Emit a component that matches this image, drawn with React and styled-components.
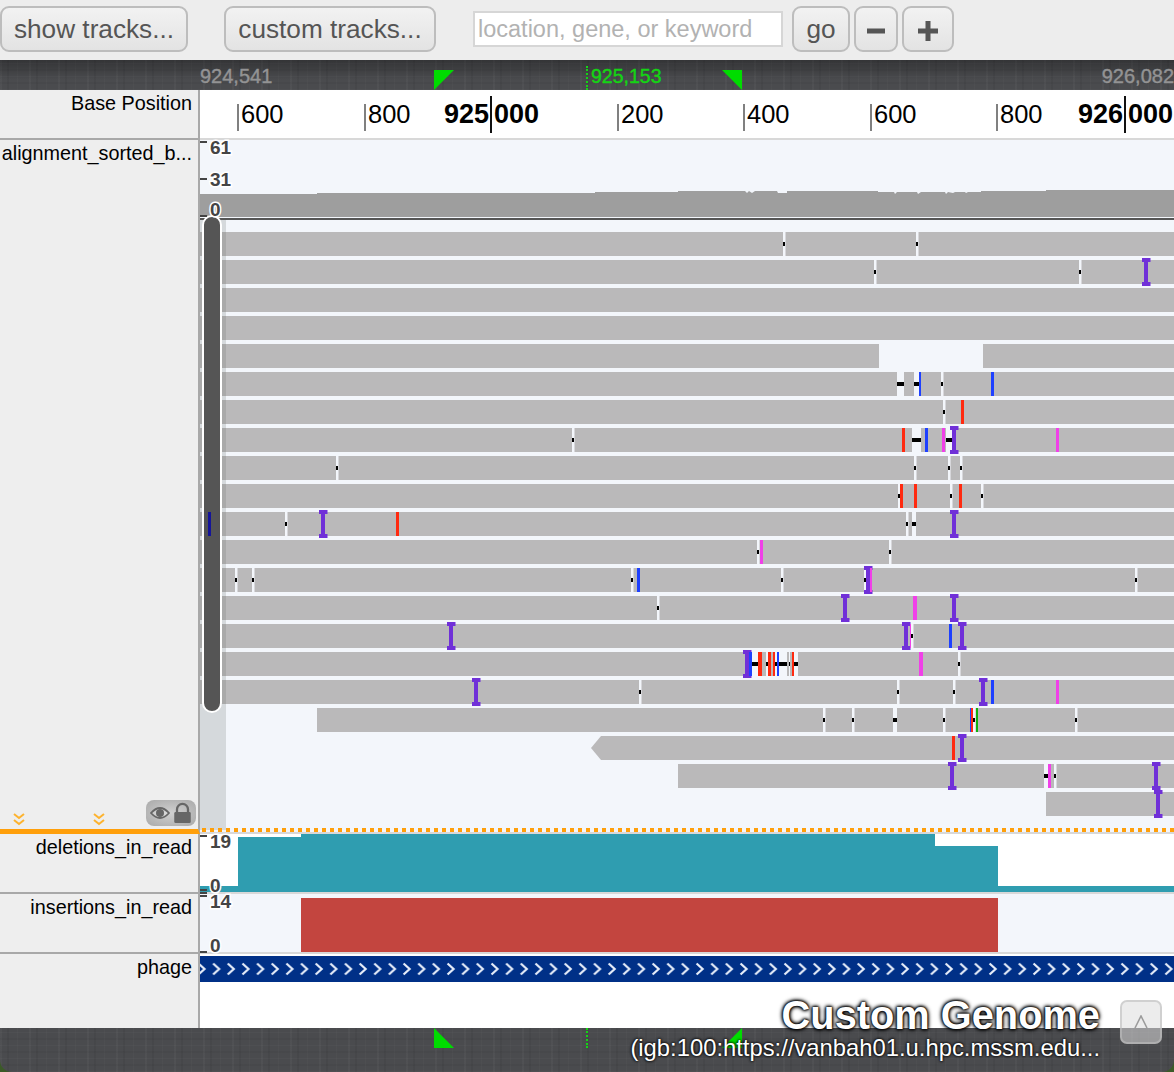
import React from 'react';
import styled, { createGlobalStyle } from 'styled-components';

const GlobalStyle = createGlobalStyle`
  html, body {
    margin: 0;
    padding: 0;
    background: #3c5a28;
    overflow: hidden;
  }
  * {
    box-sizing: border-box;
  }
`;

const darkTexture = `
  background-color: #4a4b4e;
  background-image:
    repeating-linear-gradient(90deg, rgba(255,255,255,0.03) 0 2px, transparent 2px 7px, rgba(0,0,0,0.05) 7px 9px, transparent 9px 17px, rgba(255,255,255,0.02) 17px 18px, transparent 18px 29px),
    repeating-linear-gradient(0deg, rgba(255,255,255,0.025) 0 1px, transparent 1px 6px, rgba(0,0,0,0.04) 6px 8px, transparent 8px 13px);
`;

const Page = styled.div`
  position: relative;
  width: 1174px;
  height: 1072px;
  display: flex;
  flex-direction: column;
  font-family: 'Liberation Sans', Arial, sans-serif;
  overflow: hidden;
`;

const Toolbar = styled.div`
  height: 60px;
  flex: none;
  display: flex;
  align-items: flex-start;
  padding: 6px 0 0 0;
  background: #ededed;
`;

const ToolButton = styled.button`
  width: ${(p) => p.$width}px;
  height: 46px;
  margin-left: ${(p) => p.$gap || 0}px;
  padding: 0;
  display: flex;
  align-items: center;
  justify-content: center;
  border: 2px solid #bdbdbd;
  border-radius: 9px;
  background: linear-gradient(#f2f2f2, #e3e3e3);
  color: #555;
  font-family: inherit;
  font-size: 26.2px;
`;

const ButtonGlyph = styled.svg`
  display: block;
  margin-top: 3px;
`;

const SearchInput = styled.input`
  width: 310px;
  height: 36px;
  margin: 5px 0 0 37px;
  padding: 1px 3px 0;
  border: 2px solid #d6d6d6;
  background: #fff;
  font-family: inherit;
  font-size: 23.5px;
  color: #555;

  &::placeholder {
    color: #b2b2b2;
    opacity: 1;
  }
`;

const Overview = styled.div`
  position: relative;
  height: 30px;
  flex: none;
  display: flex;
  justify-content: space-between;
  align-items: flex-end;
  padding: 0 0 0 200px;
  ${darkTexture}
`;

const OverviewShade = styled.div`
  position: absolute;
  inset: 0 0 10px 0;
  background: linear-gradient(rgba(0,0,0,0.3), rgba(0,0,0,0));
`;

const OverviewLabel = styled.span`
  position: relative;
  font-size: 20px;
  line-height: 27px;
  color: ${(p) => (p.$active ? '#14d414' : '#939394')};
  -webkit-text-stroke: 0.4px ${(p) => (p.$active ? '#14d414' : '#939394')};
`;

const CenterLabel = styled(OverviewLabel)`
  position: absolute;
  left: 591px;
  bottom: 0;
  font-size: 19.5px;
`;

const Flag = styled.div`
  position: absolute;
  left: ${(p) => p.$left}px;
  ${(p) => (p.$top ? 'top: 0;' : 'bottom: 0;')}
  width: 20px;
  height: 20px;
  background: #00dc00;
  clip-path: ${(p) => p.$shape};
`;

const CenterLine = styled.div`
  position: absolute;
  left: 586px;
  top: ${(p) => p.$top}px;
  height: ${(p) => p.$height}px;
  border-left: 2px dotted #14d414;
`;

const TrackRow = styled.div`
  height: ${(p) => p.$height}px;
  flex: none;
  display: grid;
  grid-template-columns: 200px 974px;
`;

const TrackLabel = styled.div`
  position: relative;
  padding: ${(p) => p.$top ?? 1}px 6px 0 0;
  background: #eeeeee;
  border-right: 2px solid #a8a8a8;
  border-bottom: ${(p) => (p.$accent ? '5px solid #ff9f0a' : '2px solid #a8a8a8')};
  color: #000;
  font-size: 19.8px;
  line-height: 24px;
  text-align: right;
  white-space: nowrap;
`;

const LastLabel = styled(TrackLabel)`
  border-bottom: none;
`;

const Canvas = styled.svg`
  display: block;
  width: 974px;
  height: ${(p) => p.$height}px;
  overflow: visible;
`;

const Collapse = styled.svg`
  position: absolute;
  bottom: 3px;
  left: ${(p) => p.$left}px;
  width: 14px;
  height: 14px;
`;

const LockPill = styled.div`
  position: absolute;
  right: 2px;
  bottom: 3px;
  width: 50px;
  height: 26px;
  display: flex;
  align-items: center;
  justify-content: space-between;
  padding: 0 4px 0 4px;
  border-radius: 8px;
  background: radial-gradient(ellipse at center, #d0d0d0, #a9a9a9);
`;

const BottomBar = styled.div`
  flex: 1;
  border-radius: 0 0 12px 12px;
  position: relative;
  ${darkTexture}
`;

const GenomeTitle = styled.div`
  position: absolute;
  right: 74px;
  top: 992px;
  font-size: 39.8px;
  line-height: 46px;
  font-weight: 700;
  color: #fff;
  text-shadow: 0 0 5px #000, 0 0 4px #000, 0 0 3px #000, 0 0 2px #000;
  white-space: nowrap;
`;

const GenomeUrl = styled.div`
  position: absolute;
  right: 74px;
  top: 1034px;
  font-size: 23.8px;
  line-height: 28px;
  color: #fff;
  text-shadow: 0 0 3px #000, 0 0 3px #000;
  white-space: nowrap;
`;

const UpButton = styled.div`
  position: absolute;
  left: 1120px;
  top: 1000px;
  width: 42px;
  height: 44px;
  display: flex;
  align-items: center;
  justify-content: center;
  border: 2px solid rgba(190, 190, 190, 0.6);
  border-radius: 7px;
  background: rgba(220, 220, 220, 0.55);
`;

const GREY = '#bab9ba';
const PANEL = '#f3f6fb';
const PURPLE = '#7030d8';
const RED = '#ff2a10';
const BLUE = '#1e40ff';
const MAGENTA = '#f040e8';
const GREEN = '#10b010';

// marks: d = deletion, D = wide deletion [x, w], i = insertion, s = snp colour
const reads = [
  { start: 200, marks: [['d', 784], ['d', 917]] },
  { start: 200, marks: [['d', 875], ['d', 1080], ['i', 1146]] },
  { start: 200, marks: [] },
  { start: 200, marks: [] },
  { start: 200, gap: [879, 983], marks: [] },
  { start: 200, marks: [['D', 897, 7], ['D', 914, 5], ['s', 919, BLUE, 2], ['d', 942], ['s', 991, BLUE, 3]] },
  { start: 200, marks: [['d', 944], ['s', 961, RED, 3]] },
  { start: 200, marks: [['d', 573], ['s', 902, RED, 3], ['D', 912, 9], ['s', 925, BLUE, 3], ['s', 942, MAGENTA, 3], ['D', 946, 6], ['i', 954], ['s', 1056, MAGENTA, 3]] },
  { start: 200, marks: [['d', 337], ['d', 915], ['d', 949], ['d', 961]] },
  { start: 200, marks: [['d', 899], ['s', 900, RED, 3], ['s', 914, RED, 3], ['d', 951], ['s', 959, RED, 3], ['d', 982]] },
  { start: 200, marks: [['d', 286], ['i', 323], ['s', 396, RED, 3], ['d', 907], ['D', 912, 4], ['i', 954]] },
  { start: 200, marks: [['d', 758], ['s', 760, MAGENTA, 3], ['d', 890]] },
  { start: 200, marks: [['d', 236], ['d', 253], ['d', 632], ['s', 637, BLUE, 3], ['d', 782], ['d', 865], ['i', 868], ['s', 870, MAGENTA, 2], ['d', 1136]] },
  { start: 200, marks: [['d', 658], ['i', 845], ['s', 913, MAGENTA, 4], ['i', 954]] },
  { start: 200, marks: [['i', 451], ['i', 906], ['s', 910, MAGENTA, 2], ['d', 912], ['s', 949, BLUE, 3], ['i', 962]] },
  {
    start: 200,
    marks: [
      ['D', 750, 48],
      ['s', 762, GREY, 4], ['s', 768, RED, 3], ['s', 771, GREY, 2], ['s', 773, RED, 2], ['s', 787, GREY, 2], ['s', 790, GREY, 3],
      ['i', 747], ['s', 749, BLUE, 3], ['s', 758, RED, 4], ['s', 777, BLUE, 2], ['s', 792, RED, 2],
      ['s', 919, MAGENTA, 4], ['d', 959],
    ],
  },
  { start: 200, marks: [['i', 476], ['d', 640], ['d', 898], ['d', 954], ['i', 983], ['s', 991, BLUE, 3], ['s', 1056, MAGENTA, 3]] },
  { start: 317, marks: [['d', 824], ['d', 853], ['D', 893, 4], ['d', 944], ['s', 970, BLUE, 1], ['s', 971, RED, 3], ['d', 974], ['s', 976, GREEN, 2], ['d', 1076]] },
  { start: 601, arrow: true, marks: [['s', 952, RED, 3], ['i', 962]] },
  { start: 678, marks: [['i', 952], ['D', 1044, 6], ['s', 1048, MAGENTA, 3], ['d', 1055], ['i', 1156]] },
  { start: 1046, marks: [['i', 1158]] },
];

const rowTop = (i) => 232 + i * 28;

const Mark = ({ mark, y }) => {
  const [kind, x, third, fourth] = mark;
  if (kind === 'i') {
    return (
      <g fill={PURPLE}>
        <rect x={x - 2} y={y - 2} width={4} height={28} />
        <rect x={x - 4} y={y - 2} width={8.5} height={4} />
        <rect x={x - 4} y={y + 22} width={8.5} height={4} />
      </g>
    );
  }
  if (kind === 's') {
    return <rect x={x} y={y} width={fourth} height={24} fill={third} />;
  }
  const wide = kind === 'D';
  return (
    <g>
      <rect x={wide ? x : x - 1} y={y} width={wide ? third : 2.5} height={24} fill={PANEL} />
      <rect x={wide ? x : x - 1} y={y + 10} width={wide ? third : 2} height={4} fill="#000" />
    </g>
  );
};

const Read = ({ read, index }) => {
  const y = rowTop(index);
  return (
    <g>
      {read.arrow && <polygon points={`${read.start},${y} ${read.start - 10},${y + 12} ${read.start},${y + 24}`} fill={GREY} />}
      <rect x={read.start} y={y} width={1174 - read.start} height={24} fill={GREY} />
      {read.gap && <rect x={read.gap[0]} y={y} width={read.gap[1] - read.gap[0]} height={24} fill={PANEL} />}
      {read.marks.map((mark, i) => (
        <Mark key={i} mark={mark} y={y} />
      ))}
    </g>
  );
};

const AxisText = ({ x, y, children }) => (
  <text
    x={x}
    y={y}
    fontFamily="'Liberation Sans', Arial, sans-serif"
    fontSize="19"
    fontWeight="700"
    fill="#444"
    stroke="#fff"
    strokeWidth="3"
    paintOrder="stroke"
  >
    {children}
  </text>
);

const Tick = ({ y }) => <rect x={200} y={y} width={7} height={2} fill="#444" />;

const coverage =
  '200,217 200,194 317,194 317,193 595,193 595,192 678,192 678,191 745,191 747,193 749,191 752,193 755,191 777,191 778,193 787,193 787,191 878,191 878,192 894,192 895,194 897,192 917,192 918,194 921,192 945,192 946,194 948,192 953,193 955,192 965,192 966,193 968,192 981,192 981,191 1046,191 1046,190 1174,190 1174,217';

const minorTicks = [
  [238, '600'],
  [365, '800'],
  [618, '200'],
  [744, '400'],
  [871, '600'],
  [997, '800'],
];

const majorTicks = [
  [491, '925', '000'],
  [1125, '926', '000'],
];

const Ruler = () => (
  <Canvas $height={50} viewBox="200 90 974 50">
    <rect x={200} y={90} width={974} height={48} fill="#fff" />
    <rect x={200} y={138} width={974} height={2} fill="#d8d8d8" />
    <g fontFamily="'Liberation Sans', Arial, sans-serif" fontSize="25.5" fill="#000">
      {minorTicks.map(([x, label]) => (
        <g key={x}>
          <rect x={x - 1} y={104} width={2} height={27} fill="#808080" />
          <text x={x + 3} y={123}>{label}</text>
        </g>
      ))}
      {majorTicks.map(([x, left, right]) => (
        <g key={x} fontWeight="700" fontSize="27">
          <rect x={x - 1} y={96} width={2} height={37} fill="#111" />
          <text x={x - 2} y={123} textAnchor="end">{left}</text>
          <text x={x + 3} y={123}>{right}</text>
        </g>
      ))}
    </g>
  </Canvas>
);

const AlignmentTrack = () => (
  <Canvas $height={694} viewBox="200 140 974 694">
    <rect x={200} y={140} width={974} height={694} fill={PANEL} />
    <polygon points={coverage} fill="#9e9e9e" />
    <rect x={200} y={218} width={974} height={2} fill="#555" />
    {reads.map((read, i) => (
      <Read key={i} read={read} index={i} />
    ))}
    <rect x={200} y={220} width={26} height={610} fill="rgba(110,115,110,0.22)" />
    <rect x={203} y={216} width={18} height={496} rx={9} fill="#555" stroke="#fff" strokeWidth={2} />
    <rect x={208} y={512} width={3} height={24} fill="#14149a" />
    <Tick y={141} />
    <Tick y={178} />
    <Tick y={215} />
    <AxisText x={210} y={154}>61</AxisText>
    <AxisText x={210} y={186}>31</AxisText>
    <AxisText x={210} y={216}>0</AxisText>
    <rect x={200} y={832} width={974} height={2} fill="#d8d8d8" />
    <line x1={202} y1={830} x2={1174} y2={830} stroke="#ff9f0a" strokeWidth={4} strokeDasharray="4 4" />
  </Canvas>
);

const DeletionsTrack = () => (
  <Canvas $height={60} viewBox="200 834 974 60">
    <rect x={200} y={834} width={974} height={60} fill="#fff" />
    <polygon
      points="200,892 200,886 238,886 238,837 301,837 301,834 935,834 935,846 998,846 998,886 1174,886 1174,892"
      fill="#2f9db0"
    />
    <rect x={200} y={892} width={974} height={2} fill="#d8d8d8" />
    <Tick y={835} />
    <Tick y={889} />
    <Tick y={892} />
    <AxisText x={210} y={848}>19</AxisText>
    <AxisText x={210} y={892}>0</AxisText>
  </Canvas>
);

const InsertionsTrack = () => (
  <Canvas $height={60} viewBox="200 894 974 60">
    <rect x={200} y={894} width={974} height={60} fill={PANEL} />
    <rect x={301} y={898} width={697} height={54} fill="#c3453f" />
    <rect x={200} y={952} width={974} height={2} fill="#d8d8d8" />
    <Tick y={895} />
    <Tick y={951} />
    <AxisText x={210} y={908}>14</AxisText>
    <AxisText x={210} y={952}>0</AxisText>
  </Canvas>
);

const PhageTrack = () => (
  <Canvas $height={74} viewBox="200 954 974 74">
    <defs>
      <pattern id="strand" x={197} y={956} width={14.65} height={26} patternUnits="userSpaceOnUse">
        <path d="M1.5 7.5 L7.5 13 L1.5 18.5" fill="none" stroke="#e6edf9" strokeWidth={2.2} />
      </pattern>
    </defs>
    <rect x={200} y={954} width={974} height={74} fill="#fff" />
    <rect x={200} y={956} width={974} height={26} fill="#003087" />
    <rect x={200} y={956} width={974} height={26} fill="url(#strand)" />
  </Canvas>
);

const CollapseIcon = ({ left }) => (
  <Collapse $left={left} viewBox="0 0 14 14">
    <path d="M2 2 L7 6 L12 2 M2 8 L7 12 L12 8" fill="none" stroke="#fdb32f" strokeWidth={2} />
  </Collapse>
);

const App = () => (
  <Page>
    <GlobalStyle />
    <Toolbar>
      <ToolButton $width={188}>show tracks...</ToolButton>
      <ToolButton $width={212} $gap={36}>custom tracks...</ToolButton>
      <SearchInput placeholder="location, gene, or keyword" readOnly />
      <ToolButton $width={58} $gap={9}>go</ToolButton>
      <ToolButton $width={44} $gap={4}>
        <ButtonGlyph width="18" height="18" viewBox="0 0 18 18">
          <rect x={0} y={6.5} width={18} height={5} fill="#555" />
        </ButtonGlyph>
      </ToolButton>
      <ToolButton $width={52} $gap={4}>
        <ButtonGlyph width="20" height="20" viewBox="0 0 20 20">
          <path d="M0 7.5 H7.5 V0 H12.5 V7.5 H20 V12.5 H12.5 V20 H7.5 V12.5 H0 Z" fill="#555" />
        </ButtonGlyph>
      </ToolButton>
    </Toolbar>

    <Overview>
      <OverviewShade />
      <OverviewLabel>924,541</OverviewLabel>
      <CenterLine $top={6} $height={24} />
      <CenterLabel $active>925,153</CenterLabel>
      <Flag $top={false} $left={434} $shape="polygon(0 0, 100% 0, 0 100%)" />
      <Flag $top={false} $left={722} $shape="polygon(0 0, 100% 0, 100% 100%)" />
      <OverviewLabel>926,082</OverviewLabel>
    </Overview>

    <TrackRow $height={50}>
      <TrackLabel>Base Position</TrackLabel>
      <Ruler />
    </TrackRow>

    <TrackRow $height={694}>
      <TrackLabel $accent>
        alignment_sorted_b...
        <CollapseIcon left={12} />
        <CollapseIcon left={92} />
        <LockPill>
          <svg width="20" height="14" viewBox="0 0 20 14">
            <path d="M1 7 Q10 -3 19 7 Q10 17 1 7 Z" fill="#fff" fillOpacity={0.25} stroke="#666" strokeWidth={1.8} />
            <circle cx={10} cy={7} r={4} fill="#666" />
          </svg>
          <svg width="19" height="22" viewBox="0 0 20 24">
            <path d="M4 12 V8 a6 6 0 0 1 12 0 V12" fill="none" stroke="#666" strokeWidth={2.5} />
            <rect x={1} y={11} width={18} height={12} rx={1.5} fill="#666" />
          </svg>
        </LockPill>
      </TrackLabel>
      <AlignmentTrack />
    </TrackRow>

    <TrackRow $height={60}>
      <TrackLabel>deletions_in_read</TrackLabel>
      <DeletionsTrack />
    </TrackRow>

    <TrackRow $height={60}>
      <TrackLabel>insertions_in_read</TrackLabel>
      <InsertionsTrack />
    </TrackRow>

    <TrackRow $height={74}>
      <LastLabel>phage</LastLabel>
      <PhageTrack />
    </TrackRow>

    <BottomBar>
      <CenterLine $top={0} $height={20} />
      <Flag $top $left={434} $shape="polygon(0 0, 100% 100%, 0 100%)" />
      <Flag $top $left={722} $shape="polygon(100% 0, 100% 100%, 0 100%)" />
    </BottomBar>

    <GenomeTitle>Custom Genome</GenomeTitle>
    <GenomeUrl>(igb:100:https://vanbah01.u.hpc.mssm.edu...</GenomeUrl>
    <UpButton>
      <svg width="14" height="14" viewBox="0 0 14 14">
        <path d="M1 13 L7 1 L13 13" fill="none" stroke="#9c9c9c" strokeWidth={1.6} />
      </svg>
    </UpButton>
  </Page>
);

export default App;
